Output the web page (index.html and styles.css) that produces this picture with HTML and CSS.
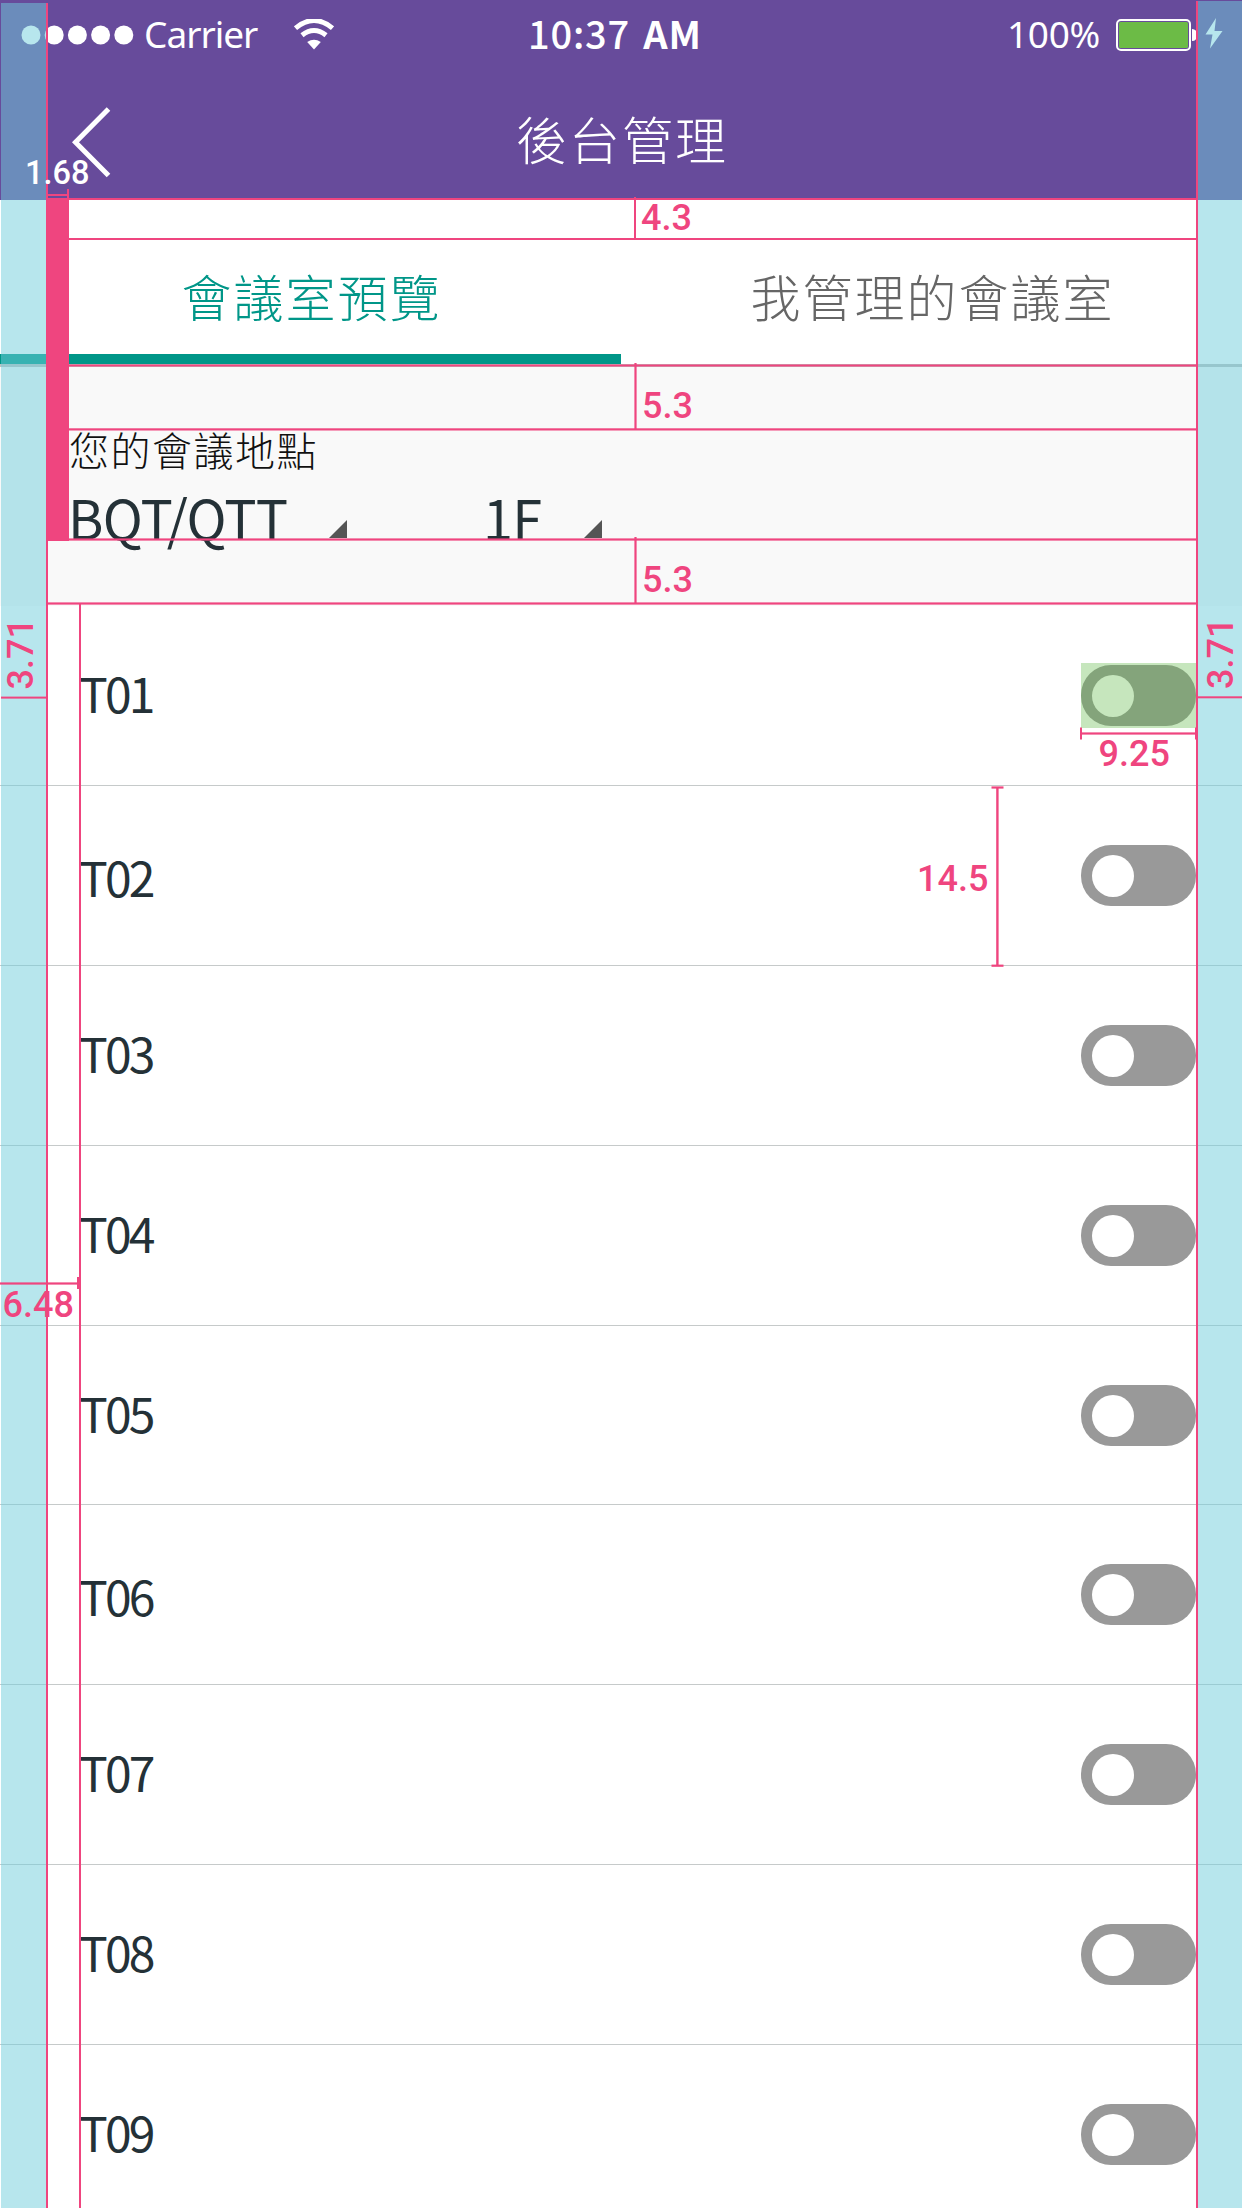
FILE: index.html
```html
<!DOCTYPE html>
<html lang="zh-Hant">
<head>
<meta charset="utf-8">
<title>後台管理</title>
<link rel="stylesheet" href="styles.css">
</head>
<body>
<div class="screen">
  <header class="header">
    <div class="status">
      <div class="status-left">
        <svg class="signal" width="105" height="20" viewBox="0 0 105 20"><circle cx="10" cy="10" r="9.5"/><circle cx="33.2" cy="10" r="9.5"/><circle cx="56.4" cy="10" r="9.5"/><circle cx="79.6" cy="10" r="9.5"/><circle cx="102.8" cy="10" r="9.5"/></svg>
        <span class="carrier">Carrier</span>
        <svg class="wifi" width="40" height="31" viewBox="0 0 40 31"><path class="arc" d="M1.5 9.2Q20-6.2 38.500 9.200M8 16.300Q20 6.800 32 16.300"/><path class="dot" d="M13.200 23Q20 18.300 26.800 23L20 30.500Z"/></svg>
      </div>
      <div class="clock">10:37 <b>AM</b></div>
      <div class="status-right">
        <span class="percent">100%</span>
        <svg class="battery" width="108" height="36" viewBox="0 0 108 36"><rect class="case" x="1" y="3" width="73" height="30" rx="4"/><rect class="charge" x="3" y="5" width="69" height="26" rx="1.500"/><path class="tip" d="M76 12q5 0 5 6t-5 6z"/><path class="bolt" d="M100 1L89.500 17.500H96.500L94 31.500L106.500 14H98.500Z"/></svg>
      </div>
    </div>
    <div class="navbar">
      <svg class="back" width="42" height="74" viewBox="0 0 42 74"><path d="M38.500 4L5.500 37.300L38.500 70.500"/></svg>
      <h1 class="title">後台管理</h1>
    </div>
  </header>
  <nav class="tabs">
    <div class="tab active"><span>會議室預覽</span></div>
    <div class="tab"><span>我管理的會議室</span></div>
  </nav>
  <section class="filter">
    <div class="filter-label">您的會議地點</div>
    <div class="selects">
      <div class="select building"><span>BQT/QTT</span><i class="caret"></i></div>
      <div class="select floor"><span>1F</span><i class="caret"></i></div>
    </div>
  </section>
  <main class="rooms">
    <div class="room"><span class="name">T01</span><span class="toggle"></span></div>
    <div class="room low"><span class="name">T02</span><span class="toggle"></span></div>
    <div class="room"><span class="name">T03</span><span class="toggle"></span></div>
    <div class="room"><span class="name">T04</span><span class="toggle"></span></div>
    <div class="room"><span class="name">T05</span><span class="toggle"></span></div>
    <div class="room low"><span class="name">T06</span><span class="toggle"></span></div>
    <div class="room"><span class="name">T07</span><span class="toggle"></span></div>
    <div class="room"><span class="name">T08</span><span class="toggle"></span></div>
    <div class="room"><span class="name">T09</span><span class="toggle"></span></div>
  </main>
  <svg class="measure" width="1242" height="2208" viewBox="0 0 1242 2208">
    <g class="margin"><rect x="1" y="3" width="45" height="2205"/><rect x="1198" y="1" width="44" height="2207"/></g>
    <rect class="target" x="1081" y="663" width="115" height="65"/>
    <g class="line">
      <rect x="46" y="3" width="2" height="2205"/><rect x="1196" y="1" width="2" height="2207"/>
      <rect x="79" y="604" width="2" height="1604"/>
      <rect x="46" y="198" width="23" height="343"/>
      <rect x="48" y="194" width="20" height="2"/><rect x="67" y="189" width="2" height="10"/>
      <rect x="48" y="198" width="1149" height="2"/><rect x="69" y="238" width="1129" height="2"/>
      <rect x="69" y="364.500" width="1129" height="2"/><rect x="69" y="428.300" width="1129" height="2.200"/>
      <rect x="69" y="538.400" width="1129" height="2.200"/><rect x="48" y="602.400" width="1150" height="2.200"/>
      <rect x="634" y="197" width="2" height="42"/><rect x="634.400" y="363" width="2.200" height="66"/><rect x="634.400" y="537" width="2.200" height="66"/>
      <rect x="1" y="696.600" width="46" height="2"/><rect x="1198" y="696.300" width="44" height="2"/>
      <rect x="0" y="1282.400" width="80" height="2.200"/><rect x="77" y="1277" width="3" height="12"/>
      <rect x="1081" y="732.400" width="115" height="2.200"/><rect x="1080" y="727.500" width="2" height="12"/><rect x="1195" y="727.500" width="2" height="12"/>
      <rect x="996.200" y="787" width="2.400" height="179"/><rect x="991.500" y="786.400" width="12" height="2.200"/><rect x="991.500" y="964.600" width="12" height="2.200"/>
    </g>
    <g class="value">
      <text class="light" x="25" y="184">1.68</text>
      <text x="641" y="229.500">4.3</text>
      <text x="642" y="417.500">5.3</text>
      <text x="642" y="591.500">5.3</text>
      <text transform="translate(33.300 689.500) rotate(-90)">3.71</text>
      <text transform="translate(1233 689) rotate(-90)">3.71</text>
      <text x="1098.500" y="765.500">9.25</text>
      <text x="917" y="890.500">14.5</text>
      <text x="2.500" y="1317">6.48</text>
    </g>
  </svg>
</div>
</body>
</html>
```
FILE: styles.css
```css
* { box-sizing: border-box; }

body {
  margin: 0;
  font-family: "Noto Sans CJK TC", sans-serif;
  color: #243137;
  background: #fff;
}

.screen {
  position: relative;
  width: 1242px;
  height: 2208px;
  overflow: hidden;
  display: flex;
  flex-direction: column;
}

/* header */
.header {
  flex: none;
  height: 200px;
  background: #674b9b;
  color: #fff;
}

.status {
  height: 70px;
  display: grid;
  grid-template-columns: 1fr 170px 1fr;
  align-items: center;
}

.status-left { display: flex; align-items: center; padding-left: 21px; height: 70px; }
.status-right { display: flex; align-items: center; justify-content: flex-end; padding-right: 18px; height: 70px; }
.signal { fill: #fff; overflow: visible; }
.carrier { margin-left: 18px; width: 150px; font: 400 37px/68px "Noto Sans", sans-serif; letter-spacing: -1px; height: 70px; }
.percent { width: 109px; height: 70px; font: 400 37px/68px "Noto Sans", sans-serif; letter-spacing: -0.300px; }
.wifi { margin-bottom: 2px; }
.wifi .arc { fill: none; stroke: #fff; stroke-width: 5; }
.wifi .dot { fill: #fff; }
.clock {
  height: 70px;
  margin-left: -8px;
  font-size: 38px;
  font-weight: 500;
  line-height: 65px;
  letter-spacing: 0.800px;
  word-spacing: 4px;
  white-space: nowrap;
}
.battery .case { fill: none; stroke: #fff; stroke-width: 2; }
.battery .charge { fill: #6cbb46; }
.battery .tip, .battery .bolt { fill: #fff; }

.navbar {
  height: 130px;
  display: grid;
  grid-template-columns: 150px 1fr 148px;
}
.back { margin: 35px 0 0 70px; fill: none; stroke: #fff; stroke-width: 5; }
.title {
  margin: 0;
  text-align: center;
  font-size: 51px;
  font-weight: 300;
  line-height: 137px;
  letter-spacing: 2px;
}

/* tabs */
.tabs {
  flex: none;
  height: 167px;
  display: grid;
  grid-template-columns: 1fr 1fr;
  border-bottom: 3px solid #bfbfbf;
}
.tab {
  padding: 57px 0 0 2px;
  text-align: center;
  font-size: 50px;
  font-weight: 300;
  line-height: 76px;
  letter-spacing: 2px;
  color: #666;
}
.tab.active { color: #009688; border-bottom: 10.500px solid #009688; }

/* location filter */
.filter {
  flex: none;
  height: 239px;
  padding: 63px 0 0 69px;
  background: #f9f9f9;
}
.filter-label {
  height: 44px;
  line-height: 38px;
  font-size: 40px;
  font-weight: 300;
  letter-spacing: 1.500px;
  color: #111;
}
.selects { display: flex; height: 64px; align-items: flex-end; }
.select {
  display: flex;
  justify-content: space-between;
  align-items: flex-end;
  height: 64px;
  font-size: 54px;
  line-height: 86px;
  letter-spacing: -0.800px;
}
.select span { height: 84px; margin: 0 0 -20px -1px; }
.building { width: 278px; }
.floor { width: 118px; margin-left: 137px; }
.caret {
  width: 18px;
  height: 18px;
  background: #555;
  clip-path: polygon(100% 0, 100% 100%, 0 100%);
}

/* room list */
.rooms { flex: none; }
.room {
  height: 179.900px;
  padding: 0 46px 0 79px;
  display: flex;
  align-items: center;
  justify-content: space-between;
  border-bottom: 1px solid #c6caca;
}
.name { font-size: 48px; line-height: 72px; letter-spacing: -2.800px; padding-bottom: 7px; }
.low .name { padding: 1px 0 0; }
.toggle {
  width: 115px;
  height: 61px;
  padding: 10px 11px;
  border-radius: 30px;
  background: #999;
}
.toggle::before {
  content: "";
  display: block;
  width: 42px;
  height: 42px;
  border-radius: 50%;
  background: #fff;
}

/* spacing annotations drawn over the screen */
.measure { position: absolute; left: 0; top: 0; }
.margin { fill: rgba(111, 205, 219, 0.5); }
.target { fill: rgba(93, 184, 68, 0.353); }
.line { fill: #ef457f; }
.value { font: 500 36px Roboto, sans-serif; fill: #ef457f; }
.value .light { font-size: 32.500px; fill: #fff; }
```
